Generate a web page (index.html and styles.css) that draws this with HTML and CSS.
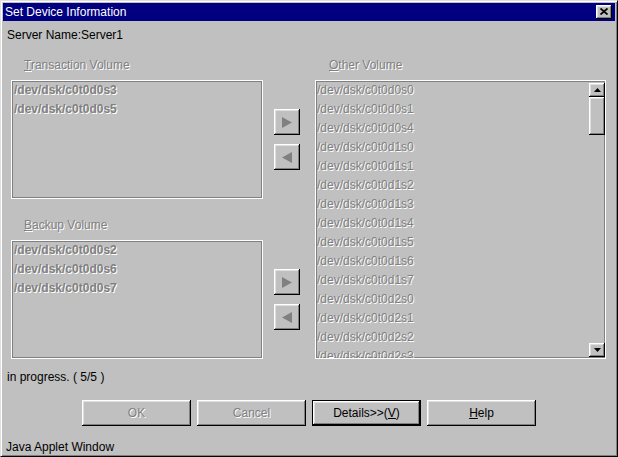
FILE: index.html
```html
<!DOCTYPE html>
<html>
<head>
<meta charset="utf-8">
<link rel="stylesheet" href="styles.css">
</head>
<body>
<div class="window">
  <div class="titlebar">
    <span class="title">Set Device Information</span>
    <button class="close"><svg width="8" height="7" viewBox="0 0 8 7"><path d="M0.5 0.5 L7.5 6.5 M7.5 0.5 L0.5 6.5" stroke="#000" stroke-width="1.8" fill="none"/></svg></button>
  </div>
  <div class="server">Server Name:Server1</div>
  <div class="main">
    <div class="label l1"><span class="mn">T</span>ransaction Volume</div>
    <div class="label r1"><span class="mn">O</span>ther Volume</div>
    <div class="list side box1">
      <div class="item">/dev/dsk/c0t0d0s3</div>
      <div class="item">/dev/dsk/c0t0d0s5</div>
    </div>
    <div class="arrows a1">
      <button class="abtn"><svg width="10" height="11" viewBox="0 0 10 11"><polygon points="0,0 10,5.5 0,11" fill="#808080"/></svg></button>
      <button class="abtn"><svg width="10" height="11" viewBox="0 0 10 11"><polygon points="10,0 0,5.5 10,11" fill="#808080"/></svg></button>
    </div>
    <div class="list other">
      <div class="items">
        <div class="item">/dev/dsk/c0t0d0s0</div>
        <div class="item">/dev/dsk/c0t0d0s1</div>
        <div class="item">/dev/dsk/c0t0d0s4</div>
        <div class="item">/dev/dsk/c0t0d1s0</div>
        <div class="item">/dev/dsk/c0t0d1s1</div>
        <div class="item">/dev/dsk/c0t0d1s2</div>
        <div class="item">/dev/dsk/c0t0d1s3</div>
        <div class="item">/dev/dsk/c0t0d1s4</div>
        <div class="item">/dev/dsk/c0t0d1s5</div>
        <div class="item">/dev/dsk/c0t0d1s6</div>
        <div class="item">/dev/dsk/c0t0d1s7</div>
        <div class="item">/dev/dsk/c0t0d2s0</div>
        <div class="item">/dev/dsk/c0t0d2s1</div>
        <div class="item">/dev/dsk/c0t0d2s2</div>
        <div class="item">/dev/dsk/c0t0d2s3</div>
      </div>
      <div class="scrollbar">
        <div class="sbtn"><svg width="7" height="4" viewBox="0 0 7 4"><polygon points="0,4 3.5,0 7,4" fill="#000"/></svg></div>
        <div class="thumb"></div>
        <div class="track"></div>
        <div class="sbtn"><svg width="7" height="4" viewBox="0 0 7 4"><polygon points="0,0 3.5,4 7,0" fill="#000"/></svg></div>
      </div>
    </div>
    <div class="label l2"><span class="mn">B</span>ackup Volume</div>
    <div class="list side box2">
      <div class="item">/dev/dsk/c0t0d0s2</div>
      <div class="item">/dev/dsk/c0t0d0s6</div>
      <div class="item">/dev/dsk/c0t0d0s7</div>
    </div>
    <div class="arrows a2">
      <button class="abtn"><svg width="10" height="11" viewBox="0 0 10 11"><polygon points="0,0 10,5.5 0,11" fill="#808080"/></svg></button>
      <button class="abtn"><svg width="10" height="11" viewBox="0 0 10 11"><polygon points="10,0 0,5.5 10,11" fill="#808080"/></svg></button>
    </div>
  </div>
  <div class="progress">in progress. ( 5/5 )</div>
  <div class="buttons">
    <button class="btn disabled">OK</button>
    <button class="btn disabled">Cancel</button>
    <button class="btn default">Details&gt;&gt;(<span class="mn">V</span>)</button>
    <button class="btn"><span class="mn">H</span>elp</button>
  </div>
  <div class="status">Java Applet Window</div>
</div>
</body>
</html>
```

FILE: styles.css
```css
body {
  margin: 0;
  font-family: "Liberation Sans", Arial, sans-serif;
  font-size: 12px;
  color: #000;
}

.window {
  width: 618px;
  height: 457px;
  box-sizing: border-box;
  background: #c0c0c0;
  border: 1px solid;
  border-color: #dfdfdf #000 #000 #dfdfdf;
  box-shadow: inset 1px 1px #fff, inset -1px -1px #808080;
  padding: 2px;
  display: flex;
  flex-direction: column;
}

.titlebar {
  height: 18px;
  flex: none;
  background: #000080;
  color: #fff;
  display: flex;
  align-items: center;
  justify-content: space-between;
  padding: 0 3px 0 2px;
}

.title {
  line-height: 14px;
}

.close {
  width: 16px;
  height: 14px;
  box-sizing: border-box;
  border: 0;
  padding: 0;
  background: #c0c0c0;
  box-shadow: inset -1px -1px #000, inset 1px 1px #fff, inset -2px -2px #808080, inset 2px 2px #dfdfdf;
  display: flex;
  align-items: center;
  justify-content: center;
}

.close svg {
  display: block;
  margin-top: -1px;
}

.server {
  margin-top: 7px;
  padding-left: 4px;
  line-height: 14px;
}

.main {
  margin: 16px 0 0 8px;
  display: grid;
  grid-template-columns: 252px 52px 291px;
  grid-template-rows: 22px 119px 41px 119px;
}

.label {
  line-height: 14px;
  color: #808080;
  text-shadow: 1px 1px 0 #fff;
}

.mn {
  text-decoration: underline;
}

.l1 {
  grid-column: 1;
  grid-row: 1;
  padding-left: 13px;
}

.r1 {
  grid-column: 3;
  grid-row: 1;
  padding-left: 14px;
}

.l2 {
  grid-column: 1;
  grid-row: 3;
  align-self: end;
  margin-bottom: 8px;
  padding-left: 13px;
}

.list {
  box-sizing: border-box;
  border: 1px solid #fff;
  box-shadow: inset 0 0 0 1px #808080;
  overflow: hidden;
}

.side {
  padding: 1px 2px;
  font-weight: bold;
}

.box1 {
  grid-column: 1;
  grid-row: 2;
}

.box2 {
  grid-column: 1;
  grid-row: 4;
}

.item {
  height: 19px;
  line-height: 16px;
  color: #808080;
  text-shadow: 1px 1px 0 #fff;
  white-space: nowrap;
}

.other {
  grid-column: 3;
  grid-row: 2 / 5;
  padding: 1px 0 0 1px;
  display: flex;
}

.items {
  flex: 1;
  overflow: hidden;
}

.scrollbar {
  width: 16px;
  flex: none;
  margin: 1px 0;
  display: flex;
  flex-direction: column;
}

.sbtn, .thumb {
  box-sizing: border-box;
  background: #c0c0c0;
  box-shadow: inset -1px -1px #000, inset 1px 1px #fff, inset -2px -2px #808080, inset 2px 2px #dfdfdf;
}

.sbtn {
  height: 14px;
  display: flex;
  align-items: center;
  justify-content: center;
}

.sbtn svg {
  display: block;
}

.thumb {
  height: 38px;
}

.track {
  flex: 1;
}

.arrows {
  align-self: center;
  padding-left: 11px;
  display: flex;
  flex-direction: column;
  gap: 9px;
}

.a1 {
  grid-column: 2;
  grid-row: 2;
}

.a2 {
  grid-column: 2;
  grid-row: 4;
}

.abtn {
  width: 26px;
  height: 26px;
  box-sizing: border-box;
  border: 0;
  padding: 0;
  background: #c0c0c0;
  box-shadow: inset -1px -1px #000, inset 1px 1px #fff, inset -2px -2px #808080, inset 2px 2px #dfdfdf;
  display: flex;
  align-items: center;
  justify-content: center;
}

.abtn svg {
  display: block;
}

.progress {
  margin-top: 11px;
  padding-left: 4px;
  line-height: 14px;
}

.buttons {
  margin-top: 16px;
  display: flex;
  justify-content: center;
  gap: 6px;
}

.btn {
  width: 109px;
  height: 26px;
  box-sizing: border-box;
  border: 0;
  padding: 0;
  background: #c0c0c0;
  font-family: "Liberation Sans", Arial, sans-serif;
  font-size: 12px;
  color: #000;
  box-shadow: inset -1px -1px #000, inset 1px 1px #fff, inset -2px -2px #808080, inset 2px 2px #dfdfdf;
}

.btn.disabled {
  color: #808080;
  text-shadow: 1px 1px 0 #fff;
}

.btn.default {
  border: 1px solid #000;
}

.status {
  margin-top: 14px;
  padding-left: 3px;
  line-height: 14px;
}
```
